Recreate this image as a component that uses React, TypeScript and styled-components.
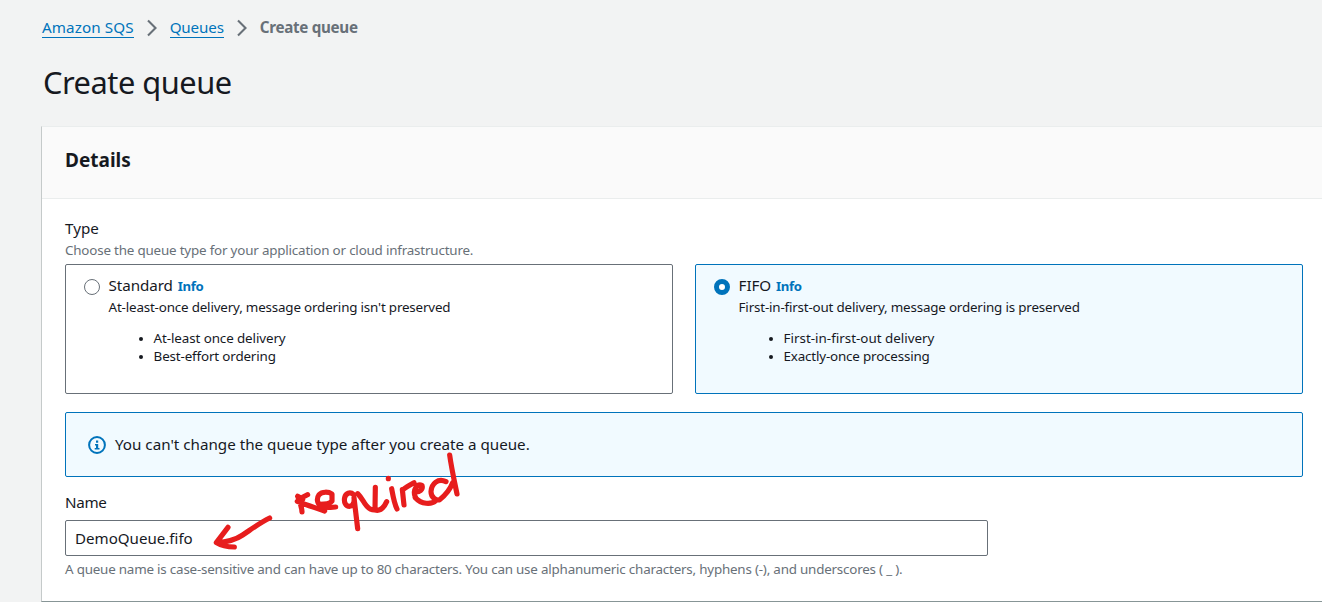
import React from 'react';
import styled, { createGlobalStyle } from 'styled-components';

const GlobalStyle = createGlobalStyle`
  * { box-sizing: border-box; }
  body {
    margin: 0;
    background: #f2f3f3;
    color: #16191f;
    font-family: "Noto Sans", "Open Sans", sans-serif;
    overflow: hidden;
  }
`;

const Page = styled.main`
  position: relative;
  width: 1322px;
  height: 602px;
  padding: 16px 0 0 41px;
  overflow: hidden;
`;

const Text = styled.span<{ $size: number; $track?: number }>`
  font-size: ${(p) => p.$size}px;
  letter-spacing: ${(p) => (p.$track ? `${p.$track}px` : 'normal')};
  white-space: nowrap;
`;

const Breadcrumbs = styled.nav`
  display: flex;
  align-items: center;
  height: 22px;
  padding-left: 1px;
`;

const Crumb = styled.a`
  height: 22px;
  line-height: 23px;
  color: #0073bb;
  border-bottom: 1px solid #0073bb;
`;

const CurrentCrumb = styled.span`
  height: 22px;
  line-height: 23px;
  font-weight: 700;
  color: #687078;
`;

const Chevron = styled.svg`
  width: 12px;
  height: 18px;
  margin: 2px 12px 0;
  fill: none;
  stroke: #687078;
  stroke-width: 2.1;
`;

const Title = styled.h1`
  margin: 23px 0 0 2px;
  height: 42px;
  line-height: 42px;
  font-weight: 400;
`;

const Panel = styled.section`
  margin-top: 23px;
  width: 1281px;
  height: 476px;
  background: #fff;
  border-left: 1px solid #c5caca;
  border-top: 1px solid #eaeded;
  border-bottom: 1px solid #879596;
`;

const PanelHeader = styled.header`
  display: flex;
  height: 72px;
  padding: 16px 23px 0;
  background: #fafafa;
  border-bottom: 1px solid #eaeded;
`;

const PanelTitle = styled.h2`
  margin: 0;
  line-height: 29px;
  font-weight: 700;
`;

const PanelBody = styled.div`
  padding: 18px 19px 0 23px;
`;

const Label = styled.div`
  height: 22px;
  line-height: 22px;
`;

const Hint = styled.div`
  height: 22px;
  line-height: 20px;
  color: #687078;
`;

const Tiles = styled.div`
  display: grid;
  grid-template-columns: 608px 608px;
  gap: 22px;
  margin-top: 3px;
`;

const Tile = styled.div<{ $selected?: boolean }>`
  display: flex;
  height: 130px;
  padding: 9px 18px;
  border: 1px solid ${(p) => (p.$selected ? '#0073bb' : '#687078')};
  border-radius: 2px;
  background: ${(p) => (p.$selected ? '#f1faff' : '#fff')};
`;

const Radio = styled.span<{ $selected?: boolean }>`
  flex: none;
  width: 16px;
  height: 16px;
  margin: 5px 8.6px 0 0;
  border-radius: 50%;
  background: #fff;
  border: ${(p) => (p.$selected ? '5px solid #0073bb' : '1px solid #687078')};
`;

const TileLine = styled.div`
  display: flex;
  align-items: baseline;
  gap: 5px;
  height: 22px;
  line-height: 22px;
`;

const InfoLink = styled.a`
  font-weight: 700;
  color: #0073bb;
`;

const TileText = styled.div`
  height: 20px;
  line-height: 20px;
`;

const Bullets = styled.ul`
  margin: 13px 0 0;
  padding-left: 45px;
  font-size: 13px;
`;

const Bullet = styled.li`
  height: 18px;
  line-height: 18px;

  &::marker {
    font-size: 11px;
  }
`;

const Alert = styled.div`
  display: flex;
  align-items: center;
  gap: 9px;
  height: 65px;
  margin: 18px 0 14px;
  padding-left: 22px;
  background: #f1faff;
  border: 1px solid #0073bb;
  border-radius: 2px;
`;

const AlertMessage = styled.div`
  height: 24px;
  line-height: 22px;
`;

const InfoIcon = styled.svg`
  width: 18px;
  height: 18px;
`;

const Field = styled.div`
  display: flex;
  align-items: center;
  width: 923px;
  height: 36px;
  margin: 7px 0 2px;
  padding: 0 9px;
  border: 1px solid #687078;
  border-radius: 2px;
  background: #fff;
`;

const Annotation = styled.svg`
  position: absolute;
  left: 200px;
  top: 445px;
  width: 280px;
  height: 115px;
  fill: none;
  stroke: #e71d1d;
  stroke-width: 15.5;
  stroke-linecap: round;
  stroke-linejoin: round;
`;

const Separator = () => (
  <Chevron viewBox="0 0 12 18">
    <path d="M2 1.5 9.5 9 2 16.5" />
  </Chevron>
);

type Option = {
  name: string;
  summary: string;
  points: { text: string; track: number }[];
  selected?: boolean;
};

const options: Option[] = [
  {
    name: 'Standard',
    summary: "At-least-once delivery, message ordering isn't preserved",
    points: [
      { text: 'At-least once delivery', track: -0.1 },
      { text: 'Best-effort ordering', track: -0.15 },
    ],
  },
  {
    name: 'FIFO',
    summary: 'First-in-first-out delivery, message ordering is preserved',
    points: [
      { text: 'First-in-first-out delivery', track: 0 },
      { text: 'Exactly-once processing', track: -0.18 },
    ],
    selected: true,
  },
];

export default function App() {
  return (
    <>
      <GlobalStyle />
      <Page>
        <Breadcrumbs>
          <Crumb><Text $size={15.2} $track={0.1}>Amazon SQS</Text></Crumb>
          <Separator />
          <Crumb><Text $size={15.2} $track={-0.15}>Queues</Text></Crumb>
          <Separator />
          <CurrentCrumb><Text $size={15.2} $track={-0.3}>Create queue</Text></CurrentCrumb>
        </Breadcrumbs>
        <Title><Text $size={30.8} $track={-0.48}>Create queue</Text></Title>
        <Panel>
          <PanelHeader>
            <PanelTitle><Text $size={19}>Details</Text></PanelTitle>
          </PanelHeader>
          <PanelBody>
            <Label><Text $size={15.2}>Type</Text></Label>
            <Hint>
              <Text $size={13.4} $track={-0.19}>
                Choose the queue type for your application or cloud infrastructure.
              </Text>
            </Hint>
            <Tiles>
              {options.map((o) => (
                <Tile key={o.name} $selected={o.selected}>
                  <Radio $selected={o.selected} />
                  <div>
                    <TileLine>
                      <Text $size={15.2} $track={-0.08}>{o.name}</Text>
                      <InfoLink><Text $size={13.2} $track={-0.4}>Info</Text></InfoLink>
                    </TileLine>
                    <TileText><Text $size={13.4} $track={-0.18}>{o.summary}</Text></TileText>
                    <Bullets>
                      {o.points.map((pt) => (
                        <Bullet key={pt.text}><Text $size={13.4} $track={pt.track}>{pt.text}</Text></Bullet>
                      ))}
                    </Bullets>
                  </div>
                </Tile>
              ))}
            </Tiles>
            <Alert>
              <InfoIcon viewBox="0 0 18 18">
                <circle cx="9" cy="9" r="7.9" fill="none" stroke="#0073bb" strokeWidth="2" />
                <path d="M8 4.5h2.2v2.2H8zM7 8h3.2v4H11.5v1.5H6.7V12H8V9.5H7z" fill="#0073bb" />
              </InfoIcon>
              <AlertMessage>
                <Text $size={15.2}>You can't change the queue type after you create a queue.</Text>
              </AlertMessage>
            </Alert>
            <Label><Text $size={15.2} $track={-0.3}>Name</Text></Label>
            <Field><Text $size={15.1}>DemoQueue.fifo</Text></Field>
            <Hint>
              <Text $size={13.4} $track={-0.203}>
                A queue name is case-sensitive and can have up to 80 characters. You can use alphanumeric characters, hyphens (-), and underscores ( _ ).
              </Text>
            </Hint>
          </PanelBody>
        </Panel>
        <Annotation viewBox="0 0 840 345">
          <path d="M209 219C180 233 155 252 128 270C105 286 80 291 49 293L84 247M49 293C65 303 82 306 103 306" />
          <path d="M293 154C299 168 305 184 306 201M323 149C311 154 301 160 292 169C319 180 346 188 374 198M293 154L308 163" />
          <path d="M359 178C376 178 392 174 396 168L396 147C386 140 366 139 357 149C349 160 351 176 363 184C377 190 392 187 407 186" />
          <path d="M461 149C450 139 437 145 434 158C431 172 437 184 449 184C459 182 464 175 462 158L473 251M473 146C482 155 488 166 494 175C504 190 514 196 525 195L526 127M525 195C540 199 551 190 560 170" />
          <path d="M575 131C579 153 582 173 591 192M565 100V101" />
          <path d="M607 134C609 150 610 165 612 180M609 134C617 127 631 119 642 113M644 140C658 143 670 134 666 121C651 115 637 135 646 156" />
          <path d="M738 110C714 98 694 117 693 140C693 158 709 166 718 165C735 152 750 134 758 113M749 30C754 67 763 108 771 147M646 158C664 178 694 180 708 166" />
        </Annotation>
      </Page>
    </>
  );
}
